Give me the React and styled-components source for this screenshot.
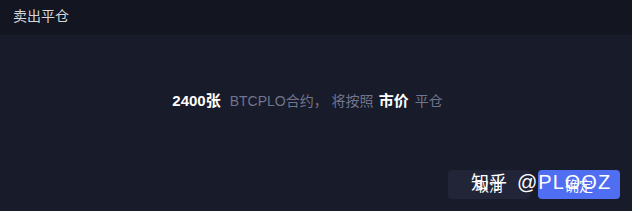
import React from 'react';
import styled, { createGlobalStyle } from 'styled-components';

const Global = createGlobalStyle`
  html, body { margin: 0; padding: 0; background: #181b29; }
  body { font-family: "Liberation Sans", "Noto Sans CJK SC", sans-serif; }
`;

const Dialog = styled.div`
  width: 632px;
  height: 211px;
  background: #181b29;
  display: flex;
  flex-direction: column;
  position: relative;
  overflow: hidden;
`;

const Header = styled.div`
  height: 35px;
  background: #131520;
  color: #d4d6dd;
  font-size: 14px;
  padding: 0 13px 5px;
  display: flex;
  align-items: center;
  box-sizing: border-box;
`;

const Body = styled.div`
  flex: 1;
  display: flex;
  justify-content: center;
  align-items: baseline;
  padding: 54px 17px 0 0;
  font-size: 14px;
  color: #70758f;
`;

const Strong = styled.span`
  color: #ffffff;
  font-weight: bold;
  font-size: 15px;
  margin-left: ${(p) => p.$left || '0'};
  margin-right: ${(p) => p.$right || '0'};
`;

const Footer = styled.div`
  display: flex;
  justify-content: flex-end;
  gap: 8px;
  padding: 0 12px 12px 0;
`;

const Button = styled.button`
  width: 82px;
  height: 29px;
  border: none;
  border-radius: 4px;
  font-family: inherit;
  font-size: 14px;
  background: ${(p) => (p.$primary ? '#4f6ef2' : '#222538')};
  color: #ffffff;
`;

const Watermark = styled.div`
  position: absolute;
  left: 471px;
  top: 168px;
  color: #ffffff;
  display: flex;
  align-items: baseline;
  gap: 10px;
  pointer-events: none;
`;

const MarkCn = styled.span`
  font-size: 18px;
`;

const MarkName = styled.span`
  font-size: 20px;
  letter-spacing: 1px;
`;

export default function App() {
  return (
    <>
      <Global />
      <Dialog>
        <Header>卖出平仓</Header>
        <Body>
          <Strong $right="9px">2400张</Strong>
          <span>BTCPLO合约， 将按照</span>
          <Strong $left="5px" $right="6px">市价</Strong>
          <span>平仓</span>
        </Body>
        <Footer>
          <Button>取消</Button>
          <Button $primary>确定</Button>
        </Footer>
        <Watermark>
          <MarkCn>知乎</MarkCn>
          <MarkName>@PLOOZ</MarkName>
        </Watermark>
      </Dialog>
    </>
  );
}
